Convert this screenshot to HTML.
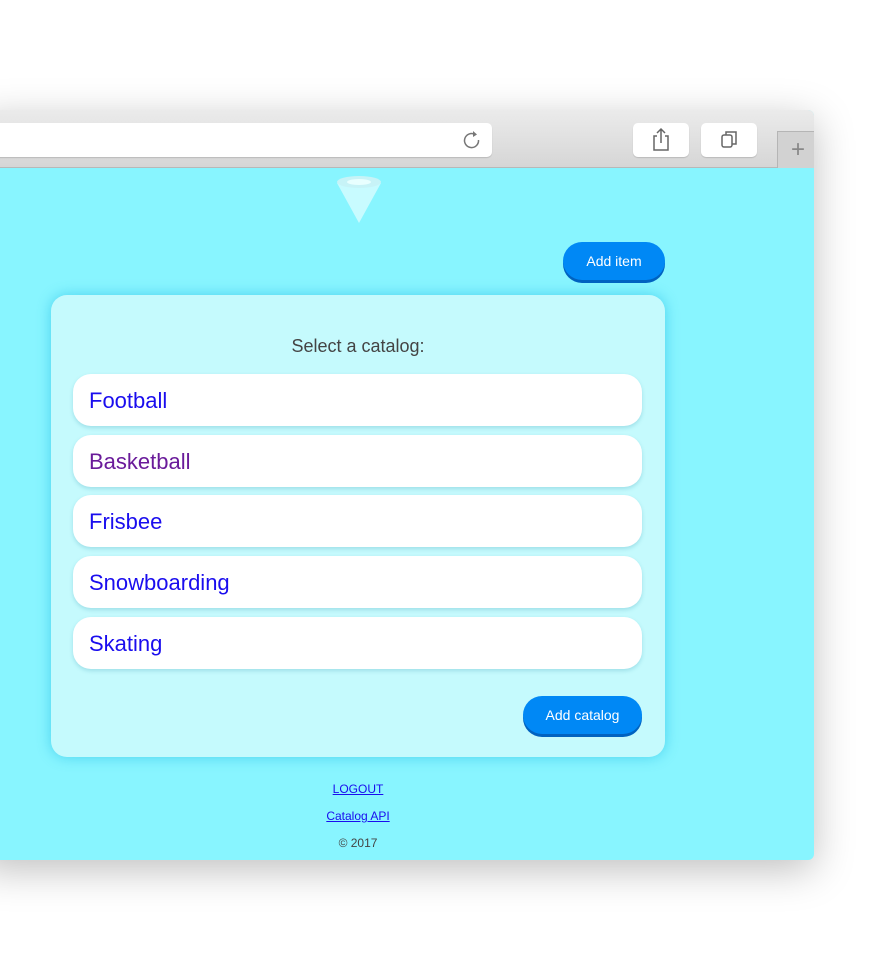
<!DOCTYPE html><html><head><style>
body{margin:0;width:884px;height:972px;background:#fff;position:relative;overflow:hidden;font-family:"Liberation Sans",sans-serif}
.win{position:absolute;left:-20px;top:110px;width:834px;height:750px;border-radius:6px;box-shadow:0 10px 40px rgba(0,0,0,.25);overflow:hidden;background:#88f5ff}
.tb{position:absolute;left:0;top:0;width:100%;height:57px;background:linear-gradient(#ebebeb,#d6d6d6);border-bottom:1px solid #b8b8b8}
.ab{position:absolute;left:0;top:13px;width:512px;height:34px;background:#fff;border-radius:5px;box-shadow:0 1px 1px rgba(0,0,0,.15)}
.bt{position:absolute;top:13px;width:56px;height:34px;background:#fff;border-radius:5px;box-shadow:0 1px 1px rgba(0,0,0,.15)}
.nt{position:absolute;left:797px;top:21px;width:40px;height:36px;background:#d2d2d2;border-left:1px solid #b5b5b5;border-top:1px solid #b5b5b5;color:#888;font-size:24px;text-align:center;line-height:36px}
.btn{position:absolute;background:#0088f5;color:#fff;border-radius:20px;box-shadow:0 3px 0 #0062c0;font-size:14px;text-align:center}
.card{position:absolute;left:71px;top:185px;width:614px;height:462px;background:#c5fafd;border-radius:16px;box-shadow:0 0 14px rgba(0,170,220,.45)}
.it{position:absolute;left:22px;width:569px;height:52px;background:#fff;border-radius:18px;box-shadow:0 2px 4px rgba(0,120,150,.2);font-size:22px;color:#1a0dee;line-height:54px;padding-left:16px;box-sizing:border-box}
.ft{position:absolute;left:0;width:756px;text-align:center;font-size:12px}
a{color:#1a0dee;text-decoration:underline}
</style></head><body>
<div class="win">
<div class="tb">
<div class="ab"><svg style="position:absolute;right:10px;top:7px" width="20" height="20" viewBox="0 0 20 20"><path d="M13 4.5A7 7 0 1 0 16.5 10" fill="none" stroke="#777" stroke-width="1.5"/><path d="M11 1l4 3.5-4 2.5z" fill="#777"/></svg></div>
<div class="bt" style="left:653px"><svg width="56" height="34" viewBox="0 0 56 34"><path d="M24 13h-3v14h14V13h-3M28 20V6M24 10l4-4 4 4" fill="none" stroke="#666" stroke-width="1.5"/></svg></div>
<div class="bt" style="left:721px"><svg width="56" height="34" viewBox="0 0 56 34"><rect x="21" y="12" width="10" height="12" rx="2" fill="none" stroke="#666" stroke-width="1.5"/><path d="M25 12V9h10v12h-4" fill="none" stroke="#666" stroke-width="1.5"/></svg></div>
<div class="nt">+</div>
</div>
<svg style="position:absolute;left:355px;top:65px" width="48" height="50" viewBox="0 0 48 50"><path d="M2 8L24 48 46 8z" fill="#d8fdff" opacity=".8"/><ellipse cx="24" cy="7" rx="22" ry="6" fill="#c7f3f7"/><ellipse cx="24" cy="7" rx="12" ry="3" fill="#e8ffff"/></svg>
<div class="btn" style="left:583px;top:132px;width:102px;height:38px;line-height:38px">Add item</div>
<div class="card">
<div style="position:absolute;top:41px;width:100%;text-align:center;font-size:18px;color:#444">Select a catalog:</div>
<div class="it" style="top:79px">Football</div>
<div class="it" style="top:140px;color:#6a1b9a">Basketball</div>
<div class="it" style="top:200px">Frisbee</div>
<div class="it" style="top:261px">Snowboarding</div>
<div class="it" style="top:322px">Skating</div>
<div class="btn" style="left:472px;top:401px;width:119px;height:38px;line-height:38px">Add catalog</div>
</div>
<div class="ft" style="top:672px"><a>LOGOUT</a></div>
<div class="ft" style="top:699px"><a>Catalog API</a></div>
<div class="ft" style="top:726px;color:#444">© 2017</div>
</div>
</body></html>
